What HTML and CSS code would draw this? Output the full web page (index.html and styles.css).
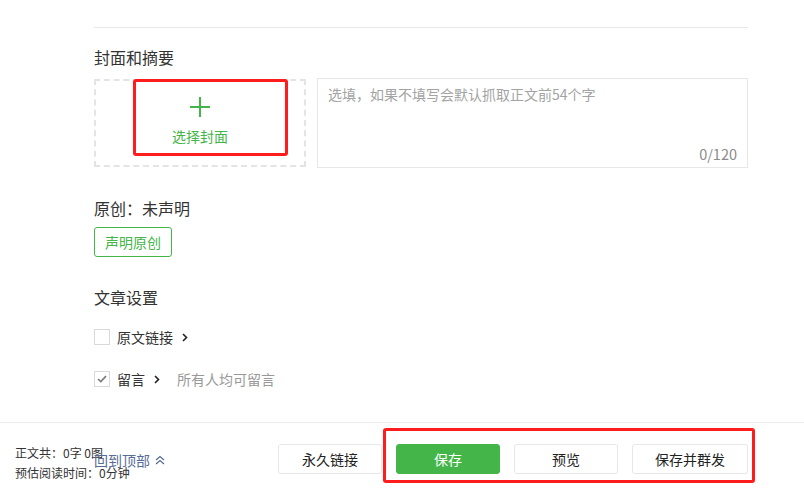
FILE: index.html
```html
<!DOCTYPE html>
<html lang="zh-CN">
<head>
<meta charset="utf-8">
<title>编辑</title>
<link rel="stylesheet" href="styles.css">
</head>
<body>
<div class="page">
  <main class="main">
    <div class="divider"></div>

    <h3 class="sec-title cover-title">封面和摘要</h3>
    <div class="cover-row">
      <div class="cover-pick">
        <svg class="plus" width="20" height="20" viewBox="0 0 20 20"><path d="M10 0V20M0 10H20" stroke="#44b549" stroke-width="2" fill="none"/></svg>
        <span class="cover-text">选择封面</span>
        <div class="mark mark-cover"></div>
      </div>
      <div class="digest">
        <div class="digest-ph">选填，如果不填写会默认抓取正文前54个字</div>
        <div class="digest-count">0/120</div>
      </div>
    </div>

    <h3 class="sec-title orig-title">原创：未声明</h3>
    <button class="btn-outline">声明原创</button>

    <h3 class="sec-title set-title">文章设置</h3>
    <div class="opt-row opt-first">
      <span class="check"></span>
      <span class="opt-label">原文链接</span>
      <svg class="chev" width="6" height="9" viewBox="0 0 6 9"><path d="M1 1L4.5 4.5L1 8" stroke="#222" stroke-width="1.6" fill="none"/></svg>
    </div>
    <div class="opt-row opt-second">
      <span class="check checked"><svg width="10" height="8" viewBox="0 0 10 8"><path d="M1 4L3.8 6.6L9 1.2" stroke="#7d7d7d" stroke-width="1.7" fill="none"/></svg></span>
      <span class="opt-label">留言</span>
      <svg class="chev" width="6" height="9" viewBox="0 0 6 9"><path d="M1 1L4.5 4.5L1 8" stroke="#222" stroke-width="1.6" fill="none"/></svg>
      <span class="opt-desc">所有人均可留言</span>
    </div>
  </main>

  <footer class="footer">
    <div class="stats">
      <div>正文共：0字 0图</div>
      <div>预估阅读时间：0分钟</div>
      <a class="to-top">回到顶部<svg width="10" height="10" viewBox="0 0 10 10"><path d="M1 5L5 1.5L9 5M1 9L5 5.5L9 9" stroke="#576b95" stroke-width="1.2" fill="none"/></svg></a>
    </div>
    <div class="actions">
      <button class="btn">永久链接</button>
      <div class="action-group">
        <button class="btn btn-primary">保存</button>
        <button class="btn">预览</button>
        <button class="btn btn-wide">保存并群发</button>
        <div class="mark mark-actions"></div>
      </div>
    </div>
  </footer>
</div>
</body>
</html>
```

FILE: styles.css
```css
* { box-sizing: border-box; }
html, body { margin: 0; padding: 0; background: #fff; }
body {
  font-family: "Noto Sans CJK SC", "Noto Sans", sans-serif;
  color: #333;
  font-size: 14px;
}
.page {
  height: 492px;
  display: flex;
  flex-direction: column;
  overflow: hidden;
}
.main {
  flex: 1;
  padding: 27px 56px 0 94px;
}
.divider {
  height: 1px;
  background: #e7e7e7;
}
.sec-title {
  margin: 0;
  font-size: 16px;
  font-weight: normal;
  line-height: 24px;
  color: #333;
}
.cover-title { margin-top: 17px; }
.cover-row {
  display: flex;
  align-items: flex-start;
  gap: 11px;
  margin-top: 9px;
}
.cover-pick {
  position: relative;
  width: 212px;
  height: 88px;
  margin-top: 1px;
  border: 2px dashed #e4e4e4;
  display: flex;
  flex-direction: column;
  align-items: center;
  justify-content: center;
}
.plus { display: block; margin-top: -4px; }
.cover-text {
  color: #44b549;
  font-size: 14px;
  line-height: 20px;
  margin-top: 9px;
}
.mark {
  position: absolute;
  border: 3px solid #ff1c1c;
  border-radius: 3px;
  pointer-events: none;
}
.mark-cover {
  left: 37px;
  top: -2px;
  width: 155px;
  height: 77px;
}
.digest {
  flex: 1;
  height: 90px;
  border: 1px solid #e7e7e7;
  padding: 5px 10px 3px 10px;
  display: flex;
  flex-direction: column;
  justify-content: space-between;
}
.digest-ph {
  color: #a3a3a3;
  line-height: 20px;
}
.digest-count {
  color: #8c8c8c;
  line-height: 20px;
  text-align: right;
  font-size: 14.5px;
}
.orig-title { margin-top: 28px; }
.btn-outline {
  display: block;
  margin-top: 7px;
  width: 78px;
  height: 30px;
  padding: 0;
  border: 1px solid #44b549;
  border-radius: 3px;
  background: #fff;
  color: #44b549;
  font-family: inherit;
  font-size: 14px;
}
.set-title { margin-top: 28px; }
.opt-row {
  display: flex;
  align-items: center;
  height: 20px;
  line-height: 20px;
}
.opt-first { margin-top: 18px; }
.opt-second { margin-top: 22px; }
.check {
  width: 16px;
  height: 16px;
  border: 1px solid #d9d9d9;
  display: flex;
  align-items: center;
  justify-content: center;
  margin-top: 0;
}
.opt-label {
  margin-left: 7px;
  color: #333;
}
.chev { margin-left: 9px; }
.opt-desc {
  margin-left: 17px;
  color: #999;
}
.footer {
  position: relative;
  height: 70px;
  border-top: 1px solid #ececec;
  display: flex;
  padding: 0 56px 0 15px;
}
.stats {
  position: relative;
  font-size: 12px;
  line-height: 20px;
  color: #333;
  padding-top: 20px;
}
.to-top {
  position: absolute;
  left: 79px;
  top: 27px;
  font-size: 14px;
  line-height: 20px;
  color: #576b95;
  white-space: nowrap;
  display: flex;
  align-items: center;
  gap: 5px;
}
.actions {
  margin-left: auto;
  display: flex;
  gap: 14px;
  padding-top: 21px;
}
.action-group {
  position: relative;
  display: flex;
  gap: 14px;
}
.btn {
  width: 104px;
  height: 30px;
  padding: 0;
  border: 1px solid #e4e8eb;
  border-radius: 3px;
  background: #fff;
  color: #222;
  font-family: inherit;
  font-size: 14px;
}
.btn-primary {
  background: #44b549;
  border-color: #44b549;
  color: #fff;
}
.btn-wide { width: 116px; }
.mark-actions {
  left: -13px;
  top: -16px;
  width: 372px;
  height: 55px;
}
```
